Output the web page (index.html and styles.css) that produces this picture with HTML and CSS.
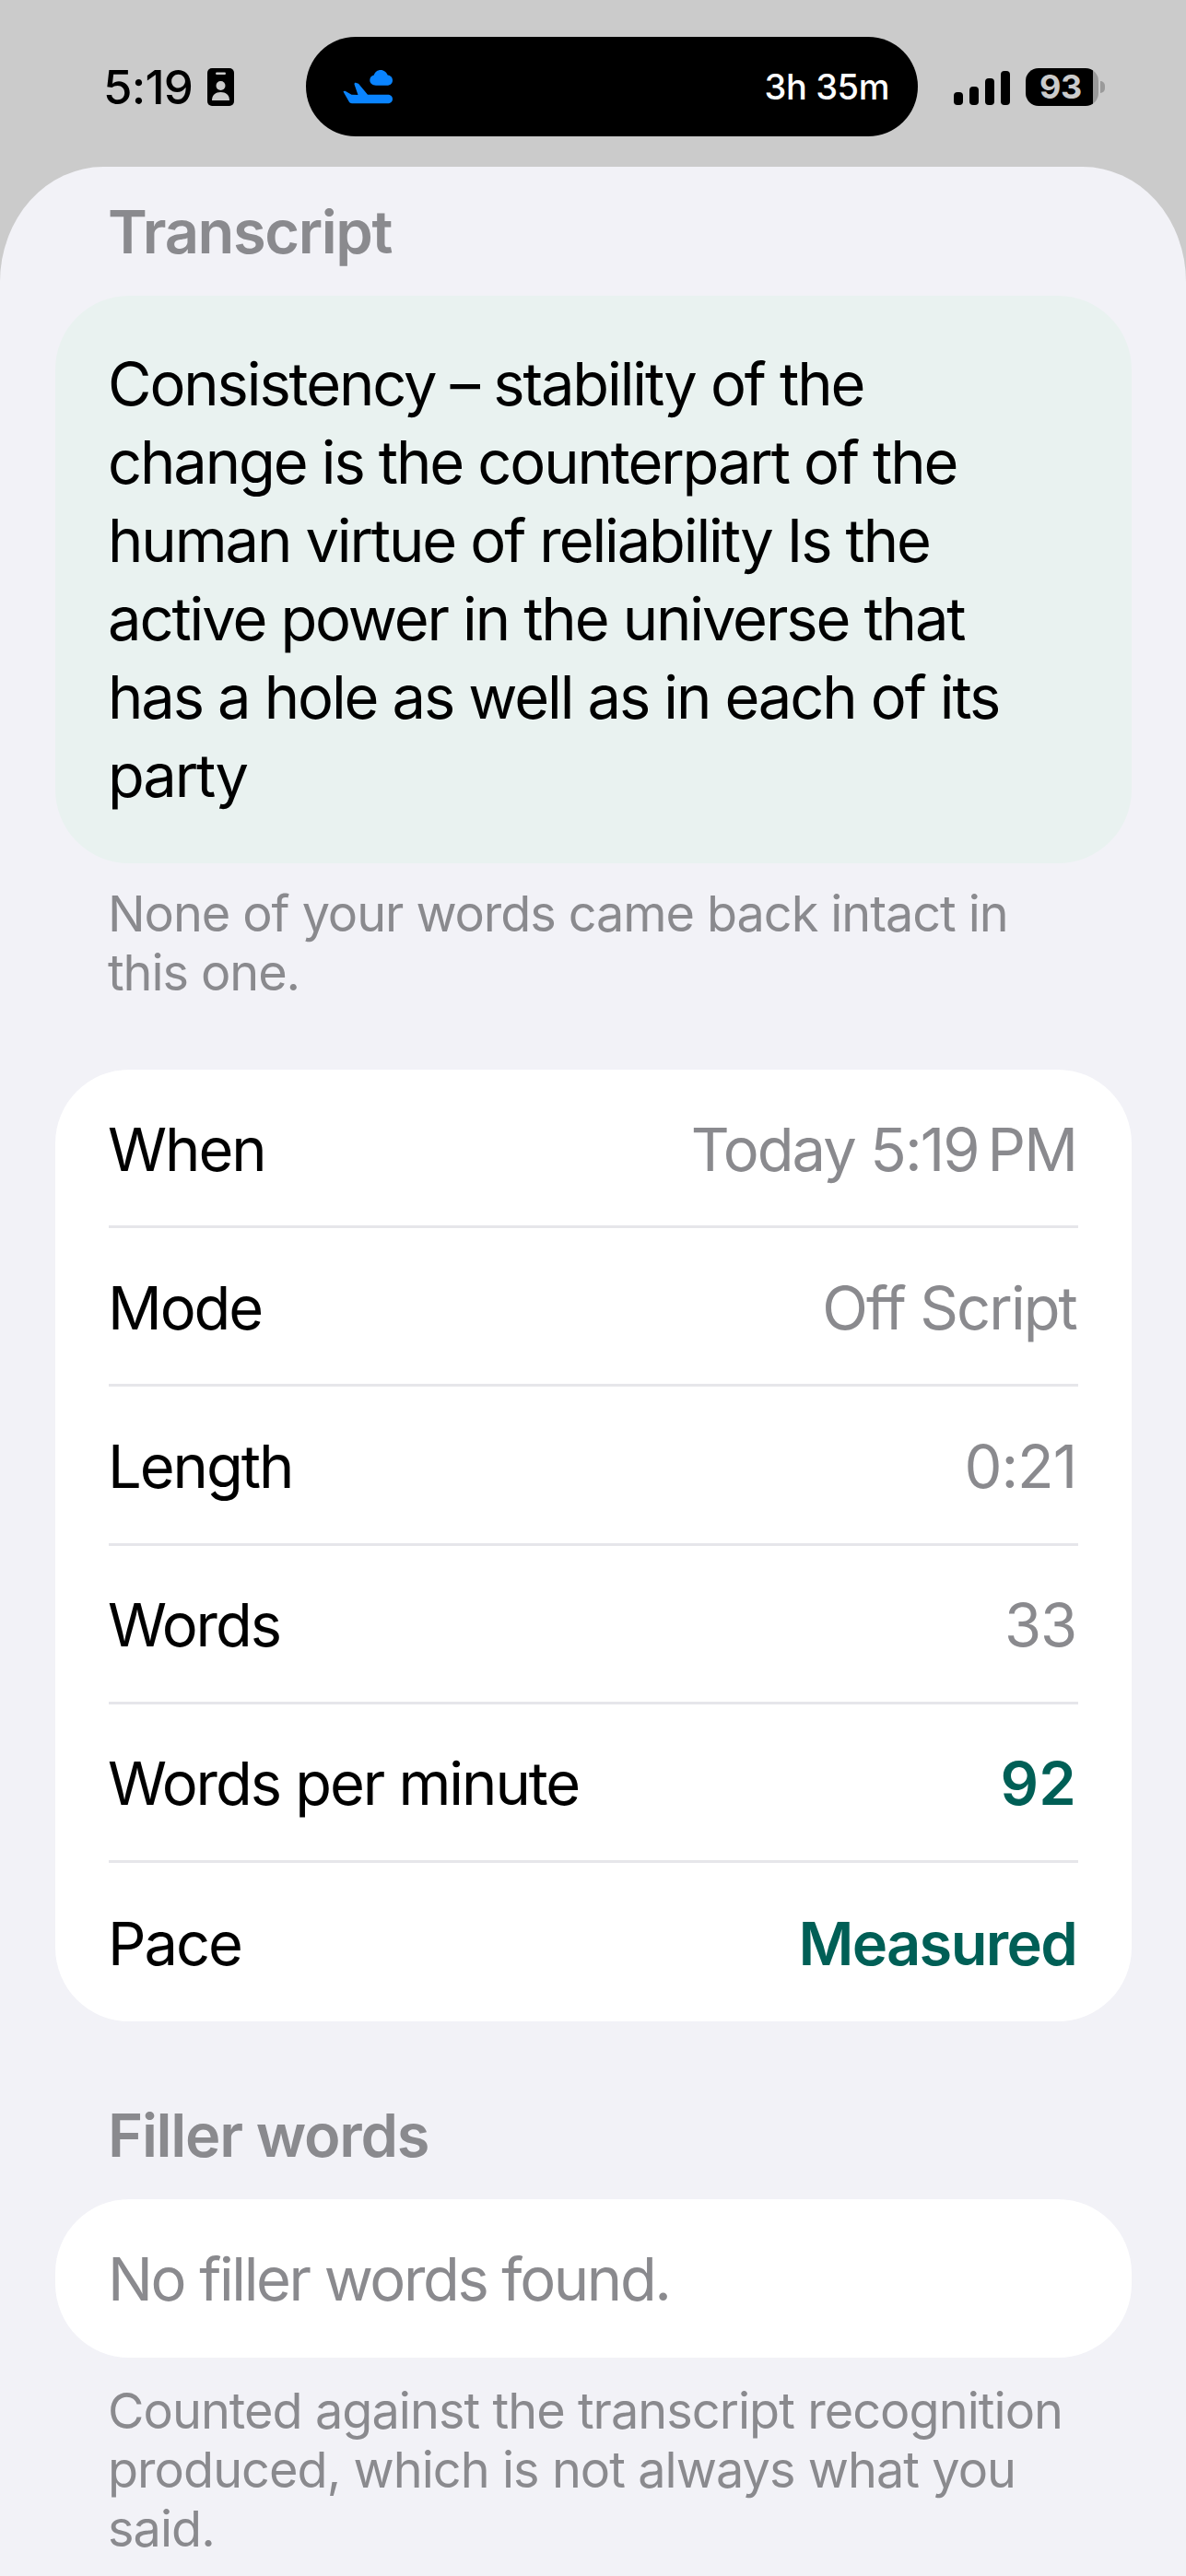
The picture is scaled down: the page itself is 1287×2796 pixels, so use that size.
FILE: index.html
```html
<!DOCTYPE html>
<html lang="en">
<head>
<meta charset="utf-8">
<title>Transcript</title>
<link rel="stylesheet" href="styles.css">
</head>
<body>
<div class="screen">
  <header class="status">
    <div class="status-left">
      <span class="time">5:19</span>
      <svg class="badge" viewBox="0 0 29 41" aria-hidden="true">
        <rect width="29" height="41" rx="5" fill="#000"/>
        <rect x="9" y="4.500" width="11" height="2.400" rx="1.200" fill="#cbcbcb"/>
        <circle cx="14.500" cy="19" r="5" fill="#cbcbcb"/>
        <path d="M5 35c0-6 4-9 9.500-9S24 29 24 35z" fill="#cbcbcb"/>
      </svg>
    </div>
    <div class="island">
      <svg class="plane" viewBox="0 0 54 37" aria-hidden="true">
        <path d="M36 16.700C32 16.700 29.300 14.200 29.300 11C29.300 8 31.300 6 33.800 5.500C34.800 2.200 37.700 0 41 0C44.700 0 47.700 2.500 48.700 5.600C51.800 6 54 8.200 54 11.200C54 14.500 51.400 16.700 48 16.700Z" fill="#0a84ff"/>
        <path d="M.5 23.500C1 22.500 2 22.500 3 23L9.500 26.700L16.500 27L12.500 15.500C12.300 14 13.500 13.600 14.500 14L17 14.800L27 26.700L48.500 26.700C51.800 26.700 54 28.700 54 31.500C54 34.300 51.800 36.300 48.500 36.300L10 36.300C8.500 36.300 7.500 35.700 6.800 34.600Z" fill="#0a84ff"/>
      </svg>
      <span class="timer">3h 35m</span>
    </div>
    <div class="status-right">
      <div class="signal">
        <span class="bar bar-1"></span>
        <span class="bar bar-2"></span>
        <span class="bar bar-3"></span>
        <span class="bar bar-4"></span>
      </div>
      <div class="battery">
        <div class="battery-body">93</div>
        <div class="battery-nub"></div>
      </div>
    </div>
  </header>

  <main class="sheet">
    <h2 class="section-title title-first">Transcript</h2>
    <div class="transcript">Consistency – stability of the change is the counterpart of the human virtue of reliability Is the active power in the universe that has a hole as well as in each of its party</div>
    <p class="note note-first">None of your words came back intact in this one.</p>

    <section class="card stats">
      <div class="row"><span class="label">When</span><span class="value">Today 5:19&#8239;PM</span></div>
      <div class="row"><span class="label">Mode</span><span class="value">Off Script</span></div>
      <div class="row"><span class="label">Length</span><span class="value num">0:21</span></div>
      <div class="row"><span class="label">Words</span><span class="value num">33</span></div>
      <div class="row"><span class="label">Words per minute</span><span class="value accent accent-num">92</span></div>
      <div class="row"><span class="label">Pace</span><span class="value accent">Measured</span></div>
    </section>

    <h2 class="section-title title-filler">Filler words</h2>
    <section class="card empty">No filler words found.</section>
    <p class="note note-last">Counted against the transcript recognition produced, which is not always what you said.</p>
  </main>
</div>
</body>
</html>
```

FILE: styles.css
```css
* { box-sizing: border-box; }
html, body { margin: 0; padding: 0; background: #f2f2f7; }
body { font-family: Inter, "Noto Sans", "Liberation Sans", sans-serif; }

.screen {
  width: 1287px;
  height: 2796px;
  overflow: hidden;
  background: #cbcbcb;
  display: flex;
  flex-direction: column;
}

.status {
  height: 181px;
  flex: none;
  display: flex;
  align-items: flex-start;
  padding: 40px 88px 0 112px;
}
.status-left {
  width: 220px;
  height: 108px;
  display: flex;
  align-items: center;
  gap: 16px;
  flex: none;
}
.time {
  font-size: 51px;
  font-weight: 500;
  color: #000;
  letter-spacing: -0.8px;
  width: 97px;
  line-height: 1;
}
.badge { width: 29px; height: 41px; flex: none; }

.island {
  width: 664px;
  height: 108px;
  flex: none;
  background: #000;
  border-radius: 54px;
  display: flex;
  align-items: center;
  justify-content: space-between;
  padding: 0 31px 0 40px;
}
.plane { width: 54px; height: 37px; flex: none; }
.timer {
  color: #fff;
  font-size: 38px;
  font-weight: 500;
  letter-spacing: -0.4px;
  line-height: 1;
}

.status-right {
  margin-left: 39px;
  display: flex;
  align-items: center;
  gap: 17px;
  height: 108px;
}
.signal { display: flex; align-items: flex-end; gap: 7px; height: 37px; margin-top: 2px; }
.bar { width: 10px; background: #000; border-radius: 4px; display: block; }
.bar-1 { height: 14px; }
.bar-2 { height: 20px; }
.bar-3 { height: 29px; }
.bar-4 { height: 37px; }

.battery { display: flex; align-items: center; }
.battery-body {
  width: 79px;
  height: 41px;
  background: linear-gradient(to right, #000 73px, #9a9a9a 73px);
  border-radius: 14px;
  color: #cbcbcb;
  font-size: 36px;
  font-weight: 700;
  line-height: 41px;
  letter-spacing: -0.5px;
  padding-left: 15px;
}
.battery-nub {
  width: 5px;
  height: 13px;
  margin-left: 2px;
  background: #9a9a9a;
  border-radius: 0 7px 7px 0;
}

.sheet {
  flex: 1;
  background: #f2f2f7;
  border-radius: 112px 112px 0 0 / 125px 125px 0 0;
  padding: 0 59px 0 60px;
}

.section-title {
  margin: 0;
  padding-left: 57px;
  color: #8a8a8e;
  font-size: 65px;
  font-weight: 600;
  line-height: 76px;
}
.title-first { padding-top: 33px; height: 140px; letter-spacing: -1.4px; }
.title-filler { margin-top: 86px; height: 107px; letter-spacing: -1.3px; }

.transcript {
  background: #e9f2f0;
  border-radius: 80px;
  height: 616px;
  padding: 53px 110px 0 57px;
  color: #000;
  font-size: 65px;
  line-height: 85px;
  letter-spacing: -2.1px;
}

.note {
  margin: 0;
  padding: 0 58px 0 57px;
  color: #8a8a8e;
  font-size: 54px;
  line-height: 64px;
}
.note-first { padding-top: 23px; height: 224px; letter-spacing: -1.07px; }
.note-last { padding-top: 26px; letter-spacing: -0.95px; }

.card {
  background: #fff;
  border-radius: 80px;
}
.stats { padding: 0 58px; }
.row {
  height: 172.2px;
  display: flex;
  align-items: center;
  justify-content: space-between;
  padding-top: 3px;
  border-bottom: 3px solid #e6e6ea;
  font-size: 65px;
  letter-spacing: -2.05px;
}
.row:last-child { border-bottom: 0; }
.label { color: #000; margin-left: -1px; }
.value { color: #8a8a8e; letter-spacing: -1.9px; margin-right: 2px; }
.num { letter-spacing: -1.1px; }
.accent { color: #005f56; font-weight: 600; letter-spacing: -1.7px; }
.accent-num { letter-spacing: 0.25px; }

.empty {
  height: 172px;
  padding: 0 58px 0 57px;
  display: flex;
  align-items: center;
  color: #8a8a8e;
  font-size: 65px;
  letter-spacing: -2.35px;
}
```
